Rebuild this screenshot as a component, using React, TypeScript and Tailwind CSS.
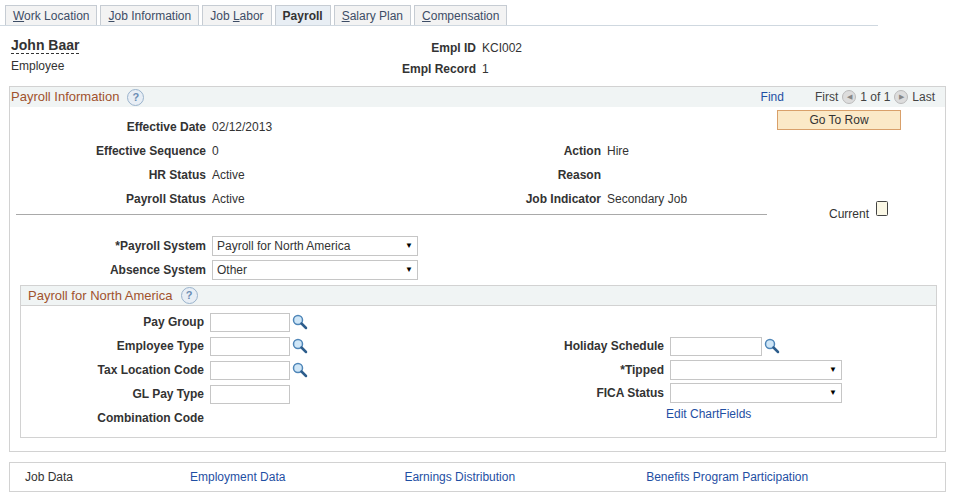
import React from 'react'

const font = { fontFamily: '"Liberation Sans", Arial, sans-serif' }

const tabs = [
  { label: 'Work Location', u: 'W', rest: 'ork Location' },
  { label: 'Job Information', u: 'J', rest: 'ob Information' },
  { label: 'Job Labor', pre: 'Job ', u: 'L', rest: 'abor' },
  { label: 'Payroll', active: true },
  { label: 'Salary Plan', u: 'S', rest: 'alary Plan' },
  { label: 'Compensation', u: 'C', rest: 'ompensation' },
]

function Help() {
  return (
    <span className="inline-flex items-center justify-center w-[17px] h-[17px] rounded-full border border-[#9ab3cc] bg-[#e8eef5] text-[11px] font-bold text-[#6b8cb3] ml-2">?</span>
  )
}

function Lookup() {
  return (
    <svg width="16" height="16" viewBox="0 0 16 16" className="ml-[2px]">
      <circle cx="6" cy="6" r="4.5" fill="#cfe6f7" stroke="#4f86b8" strokeWidth="1.5" />
      <path d="M9.5 9.5 L14 14" stroke="#2d5d8c" strokeWidth="2.5" strokeLinecap="round" />
    </svg>
  )
}

function Select({ w, value }: { w: number; value: string }) {
  return (
    <div className="h-[20px] border border-[#c6c6c6] bg-white flex items-center justify-between px-1 text-[12px] text-[#333]" style={{ width: w }}>
      <span>{value}</span>
      <span className="text-[8px] text-black">▼</span>
    </div>
  )
}

function Input({ w }: { w: number }) {
  return <div className="h-[19px] border border-[#c6c6c6] bg-white" style={{ width: w }} />
}

function Row({ label, children, lw, h = 24 }: { label: string; children?: React.ReactNode; lw: number; h?: number }) {
  return (
    <div className="flex items-center" style={{ height: h }}>
      <div className="text-right font-bold text-[#333] pr-[6px] shrink-0" style={{ width: lw }}>{label}</div>
      <div className="flex items-center text-[#333]">{children}</div>
    </div>
  )
}

export default function App() {
  return (
    <div className="w-[958px] h-[501px] bg-white text-[12px] text-[#333] relative" style={font}>
      {/* tabs */}
      <div className="flex items-end pl-[5px] pt-[5px] border-b border-[#cfd8e0] w-[878px] gap-[3px]">
        {tabs.map((t) => (
          <div
            key={t.label}
            className={`h-[20px] px-[7px] flex items-center border border-b-0 border-[#c6ccd3] text-[12px] ${t.active ? 'bg-[#e8eef4] font-bold text-[#333]' : 'bg-[#f3f3f3] text-[#3d4d66]'}`}
          >
            {t.active ? t.label : (<span>{t.pre}<span className="underline">{t.u}</span>{t.rest}</span>)}
          </div>
        ))}
      </div>

      {/* header */}
      <div className="flex pt-[11px] pl-[11px] h-[60px]">
        <div className="w-[391px]">
          <div className="text-[14px] font-bold inline-block border-b border-dashed border-[#333] leading-[16px]">John Baar</div>
          <div className="mt-[2px]">Employee</div>
        </div>
        <div>
          <Row label="Empl ID" lw={80} h={22}>KCI002</Row>
          <Row label="Empl Record" lw={80} h={20}>1</Row>
        </div>
      </div>

      {/* payroll info box */}
      <div className="ml-[9px] w-[937px] h-[366px] border border-[#d2d2d2]">
        <div className="h-[20px] bg-[#f0f4f4] flex items-center pl-[1px] text-[#a0522d] text-[13px]">
          Payroll Information <Help />
          <div className="ml-auto flex items-center text-[12px] pr-[10px]">
            <span className="text-[#1f4fa3] mr-[31px]">Find</span>
            <span className="text-[#444]">First</span>
            <span className="mx-[4px] w-[14px] h-[14px] rounded-full bg-[#ddd] border border-[#bbb] text-[7px] flex items-center justify-center text-[#888]">◀</span>
            <span className="text-[#444]">1 of 1</span>
            <span className="mx-[4px] w-[14px] h-[14px] rounded-full bg-[#ddd] border border-[#bbb] text-[7px] flex items-center justify-center text-[#888]">▶</span>
            <span className="text-[#444]">Last</span>
          </div>
        </div>
        <div className="flex">
          <div className="pt-[8px] w-[290px] shrink-0">
            <Row label="Effective Date" lw={202}>02/12/2013</Row>
            <Row label="Effective Sequence" lw={202}>0</Row>
            <Row label="HR Status" lw={202}>Active</Row>
            <Row label="Payroll Status" lw={202}>Active</Row>
          </div>
          <div className="pt-[32px] w-[475px] shrink-0">
            <Row label="Action" lw={307}>Hire</Row>
            <Row label="Reason" lw={307} />
            <Row label="Job Indicator" lw={307}>Secondary Job</Row>
          </div>
          <div className="pt-[3px] pl-[2px]">
            <div className="w-[124px] h-[20px] bg-[#fbe9c7] border border-[#d9a06a] flex items-center justify-center text-[#333]">Go To Row</div>
          </div>
        </div>
        <div className="flex items-start mt-[1px]">
          <div className="ml-[6px] w-[751px] border-t border-[#a9a9a9] mt-[2px]" />
          <div className="ml-[62px] flex items-start mt-[-12px]">
            <span className="mt-[5px]">Current</span>
            <svg width="12" height="16" viewBox="0 0 12 16" className="ml-[7px]">
              <rect x="0.5" y="1.5" width="11" height="14" rx="1" fill="#fbf8e6" stroke="#444" />
              <path d="M2 1.5 h8" stroke="#444" strokeDasharray="1 1" />
            </svg>
          </div>
        </div>
        <div className="mt-[11px]">
          <Row label="*Payroll System" lw={202}><Select w={206} value="Payroll for North America" /></Row>
          <Row label="Absence System" lw={202}><Select w={206} value="Other" /></Row>
        </div>
        {/* sub box */}
        <div className="ml-[10px] mt-[3px] w-[917px] h-[153px] border border-[#d2d2d2]">
          <div className="h-[20px] bg-[#f0f4f4] border-b border-[#d2d2d2] flex items-center pl-[7px] text-[#a0522d] text-[13px]">
            Payroll for North America <Help />
          </div>
          <div className="flex pt-[4px]">
            <div className="w-[290px] shrink-0">
              <Row label="Pay Group" lw={189}><Input w={80} /><Lookup /></Row>
              <Row label="Employee Type" lw={189}><Input w={80} /><Lookup /></Row>
              <Row label="Tax Location Code" lw={189}><Input w={80} /><Lookup /></Row>
              <Row label="GL Pay Type" lw={189}><Input w={80} /></Row>
              <Row label="Combination Code" lw={189} />
            </div>
            <div className="pt-[24px]">
              <Row label="Holiday Schedule" lw={359}><Input w={92} /><Lookup /></Row>
              <Row label="*Tipped" lw={359} h={23}><Select w={172} value="" /></Row>
              <Row label="FICA Status" lw={359} h={23}><Select w={172} value="" /></Row>
              <div className="text-[#1f4fa3] h-[20px] flex items-center pl-[355px]">Edit ChartFields</div>
            </div>
          </div>
        </div>
      </div>

      {/* bottom links */}
      <div className="ml-[9px] mt-[10px] w-[937px] h-[30px] border border-[#d2d2d2] flex items-center text-[12px]">
        <span className="ml-[15px] text-[#333]">Job Data</span>
        <span className="ml-[117px] text-[#1f4fa3]">Employment Data</span>
        <span className="ml-[119px] text-[#1f4fa3]">Earnings Distribution</span>
        <span className="ml-[131px] text-[#1f4fa3]">Benefits Program Participation</span>
      </div>
    </div>
  )
}
